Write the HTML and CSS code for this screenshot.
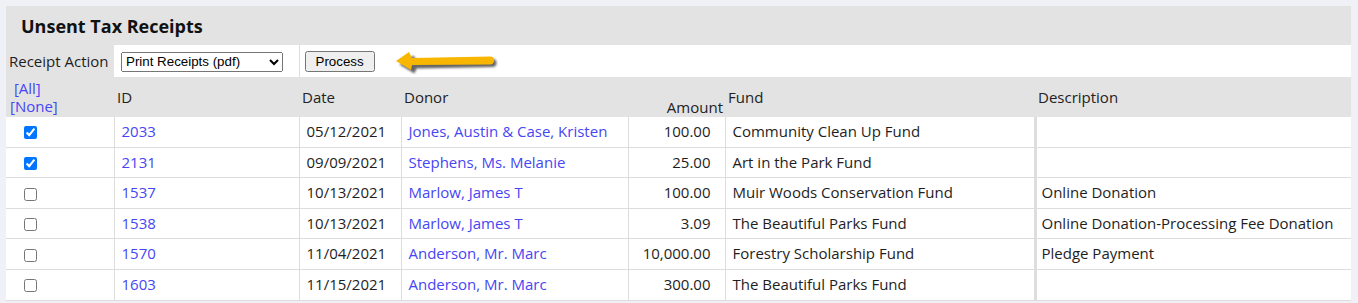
FILE: index.html
```html
<!DOCTYPE html>
<html>
<head>
<meta charset="utf-8">
<link rel="stylesheet" href="styles.css">
</head>
<body>
<table class="receipts">
  <colgroup>
    <col class="c-sel"><col class="c-id"><col class="c-date"><col class="c-donor"><col class="c-amt"><col class="c-fund"><col class="c-desc">
  </colgroup>
  <thead>
    <tr class="title-row"><th colspan="7" class="title">Unsent Tax Receipts</th></tr>
    <tr class="action-row">
      <th class="action-label">Receipt Action</th>
      <td class="action-select">
        <select class="ctl"><option>Print Receipts (pdf)</option></select>
      </td>
      <td colspan="5" class="action-btn">
        <button class="ctl btn">Process</button>
        <svg class="arrow" width="106" height="28" viewBox="0 0 106 28">
          <defs>
            <filter id="sh" x="-10%" y="-30%" width="130%" height="180%">
              <feGaussianBlur stdDeviation="1.2"/>
            </filter>
          </defs>
          <path d="M5 15 L19 6 L22 11 L98 9.5 A4 4 0 0 1 98 17.5 L22 19 L20 24 Z" fill="#333" opacity="0.75" filter="url(#sh)" transform="translate(1.5,1.5)"/>
          <path d="M3 13 L16 4 L19 10 L97 8.5 A4 4 0 0 1 97 16.5 L19 17 L18 22 Z" fill="#f8b600"/>
        </svg>
      </td>
    </tr>
    <tr class="head-row">
      <th class="h-sel"><a class="lnk" href="#">&nbsp;[All]</a><br><a class="lnk" href="#">[None]</a></th>
      <th>ID</th>
      <th>Date</th>
      <th>Donor</th>
      <th class="h-amt">Amount</th>
      <th>Fund</th>
      <th>Description</th>
    </tr>
  </thead>
  <tbody>
    <tr>
      <td class="sel"><input type="checkbox" checked></td>
      <td><a class="lnk" href="#">2033</a></td>
      <td>05/12/2021</td>
      <td><a class="lnk" href="#">Jones, Austin &amp; Case, Kristen</a></td>
      <td class="amt">100.00</td>
      <td>Community Clean Up Fund</td>
      <td class="desc"></td>
    </tr>
    <tr>
      <td class="sel"><input type="checkbox" checked></td>
      <td><a class="lnk" href="#">2131</a></td>
      <td>09/09/2021</td>
      <td><a class="lnk" href="#">Stephens, Ms. Melanie</a></td>
      <td class="amt">25.00</td>
      <td>Art in the Park Fund</td>
      <td class="desc"></td>
    </tr>
    <tr>
      <td class="sel"><input type="checkbox"></td>
      <td><a class="lnk" href="#">1537</a></td>
      <td>10/13/2021</td>
      <td><a class="lnk" href="#">Marlow, James T</a></td>
      <td class="amt">100.00</td>
      <td>Muir Woods Conservation Fund</td>
      <td class="desc">Online Donation</td>
    </tr>
    <tr>
      <td class="sel"><input type="checkbox"></td>
      <td><a class="lnk" href="#">1538</a></td>
      <td>10/13/2021</td>
      <td><a class="lnk" href="#">Marlow, James T</a></td>
      <td class="amt">3.09</td>
      <td>The Beautiful Parks Fund</td>
      <td class="desc">Online Donation-Processing Fee Donation</td>
    </tr>
    <tr>
      <td class="sel"><input type="checkbox"></td>
      <td><a class="lnk" href="#">1570</a></td>
      <td>11/04/2021</td>
      <td><a class="lnk" href="#">Anderson, Mr. Marc</a></td>
      <td class="amt">10,000.00</td>
      <td>Forestry Scholarship Fund</td>
      <td class="desc">Pledge Payment</td>
    </tr>
    <tr>
      <td class="sel"><input type="checkbox"></td>
      <td><a class="lnk" href="#">1603</a></td>
      <td>11/15/2021</td>
      <td><a class="lnk" href="#">Anderson, Mr. Marc</a></td>
      <td class="amt">300.00</td>
      <td>The Beautiful Parks Fund</td>
      <td class="desc"></td>
    </tr>
  </tbody>
</table>
</body>
</html>
```

FILE: styles.css
```css
html, body { margin: 0; padding: 0; }
body {
  background: #eff1f6;
  padding: 6px 7px 0 6px;
  font-family: "Open Sans", "Noto Sans", sans-serif;
  font-size: 15px;
  color: #1e1e1e;
}
.receipts {
  width: 100%;
  border-collapse: collapse;
  table-layout: fixed;
  background: #fff;
}
.c-sel { width: 108px; }
.c-id { width: 185px; }
.c-date { width: 102px; }
.c-donor { width: 227px; }
.c-amt { width: 97px; }
.c-fund { width: 310px; }
.c-desc { width: auto; }

.title {
  background: #e3e3e3;
  text-align: left;
  font-size: 18px;
  font-weight: bold;
  height: 39px;
  line-height: 22px;
  padding: 0 0 0 15px;
  color: #111;
}
.action-row th, .action-row td { height: 32px; padding: 0; line-height: 20px; }
.action-label {
  background: #e3e3e3;
  text-align: left;
  font-weight: normal;
  padding-left: 3px !important;
}
.action-select { padding-left: 6px !important; border-right: 1px solid #ddd; }
.action-btn { padding-left: 5px !important; }
.ctl {
  font-family: "Liberation Sans", Arial, sans-serif;
  font-size: 13.33px;
  vertical-align: middle;
}
select.ctl { width: 162px; height: 20px; margin-left: 1px; }
.btn { height: 21px; padding: 0 9px; }
.arrow { vertical-align: middle; margin-left: 14px; position: relative; top: 1px; }

.head-row th {
  background: #e3e3e3;
  font-weight: normal;
  text-align: left;
  height: 39px;
  padding: 0 3px;
  vertical-align: middle;
  color: #222;
  line-height: 18px;
}
.head-row .h-sel { padding-left: 4px; }
.head-row .h-amt { text-align: right; vertical-align: bottom; padding-right: 2px; padding-bottom: 1px; }

.lnk { color: #4646f4; text-decoration: none; }

tbody td {
  border-bottom: 1px solid #ddd;
  border-right: 1px solid #ddd;
  padding: 5px 7px;
  line-height: 19.6px;
  white-space: nowrap;
}
tbody td.sel { padding-left: 14px; }
tbody td.sel input { margin: 0 3px 0 4px; vertical-align: middle; width: 13px; height: 13px; }
tbody td.amt { text-align: right; padding-right: 14px; }
tbody td.desc { border-left: 3px solid #ddd; padding-left: 5px; border-right: 0; }
```
